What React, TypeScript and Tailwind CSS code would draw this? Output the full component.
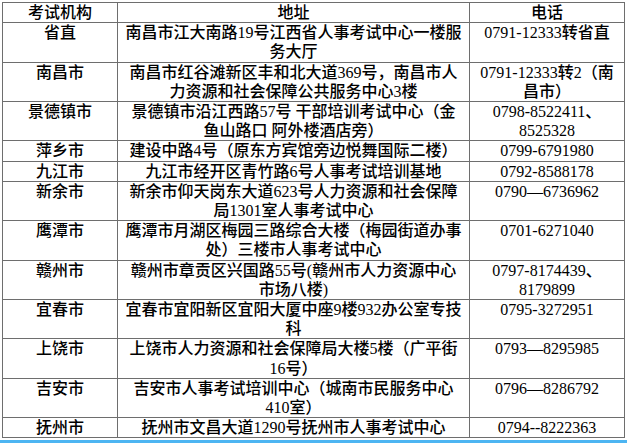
const rows: { org: string; addr: string[]; tel: string[] }[] = [
  { org: "省直", addr: ["南昌市江大南路19号江西省人事考试中心一楼服", "务大厅"], tel: ["0791-12333转省直"] },
  { org: "南昌市", addr: ["南昌市红谷滩新区丰和北大道369号，南昌市人", "力资源和社会保障公共服务中心3楼"], tel: ["0791-12333转2（南", "昌市）"] },
  { org: "景德镇市", addr: ["景德镇市沿江西路57号 干部培训考试中心（金", "鱼山路口 阿外楼酒店旁）"], tel: ["0798-8522411、", "8525328"] },
  { org: "萍乡市", addr: ["建设中路4号（原东方宾馆旁边悦舞国际二楼）"], tel: ["0799-6791980"] },
  { org: "九江市", addr: ["九江市经开区青竹路6号人事考试培训基地"], tel: ["0792-8588178"] },
  { org: "新余市", addr: ["新余市仰天岗东大道623号人力资源和社会保障", "局1301室人事考试中心"], tel: ["0790—6736962"] },
  { org: "鹰潭市", addr: ["鹰潭市月湖区梅园三路综合大楼（梅园街道办事", "处）三楼市人事考试中心"], tel: ["0701-6271040"] },
  { org: "赣州市", addr: ["赣州市章贡区兴国路55号(赣州市人力资源中心", "市场八楼)"], tel: ["0797-8174439、", "8179899"] },
  { org: "宜春市", addr: ["宜春市宜阳新区宜阳大厦中座9楼932办公室专技", "科"], tel: ["0795-3272951"] },
  { org: "上饶市", addr: ["上饶市人力资源和社会保障局大楼5楼（广平街", "16号）"], tel: ["0793—8295985"] },
  { org: "吉安市", addr: ["吉安市人事考试培训中心（城南市民服务中心", "410室）"], tel: ["0796—8286792"] },
  { org: "抚州市", addr: ["抚州市文昌大道1290号抚州市人事考试中心"], tel: ["0794--8222363"] },
];

const cell = "border border-[#6e6e6e] p-0 align-top text-center whitespace-nowrap";

const Lines = ({ lines }: { lines: string[] }) => (
  <>
    {lines.map((l, i) => (
      <div key={i}>{l}</div>
    ))}
  </>
);

export default function App() {
  return (
    <div className="w-[627px] h-[443px] bg-white overflow-hidden flex flex-col">
      <div className="pl-[2px] pt-[2px]">
        <table
          className="border-collapse table-fixed w-[622px] text-[16px] leading-[19.2px] font-medium text-black"
          style={{ fontFamily: '"Liberation Serif", "Noto Sans CJK SC", serif' }}
        >
          <colgroup>
            <col className="w-[115px]" />
            <col className="w-[352px]" />
            <col className="w-[155px]" />
          </colgroup>
          <thead>
            <tr>
              <th className={cell + " font-medium"}>考试机构</th>
              <th className={cell + " font-medium"}>地址</th>
              <th className={cell + " font-medium"}>电话</th>
            </tr>
          </thead>
          <tbody>
            {rows.map((r) => (
              <tr key={r.org}>
                <td className={cell}>{r.org}</td>
                <td className={cell}>
                  <Lines lines={r.addr} />
                </td>
                <td className={cell}>
                  <Lines lines={r.tel} />
                </td>
              </tr>
            ))}
          </tbody>
        </table>
      </div>
      <div className="mt-auto h-[3px] bg-[#4db5f2]" />
    </div>
  );
}
